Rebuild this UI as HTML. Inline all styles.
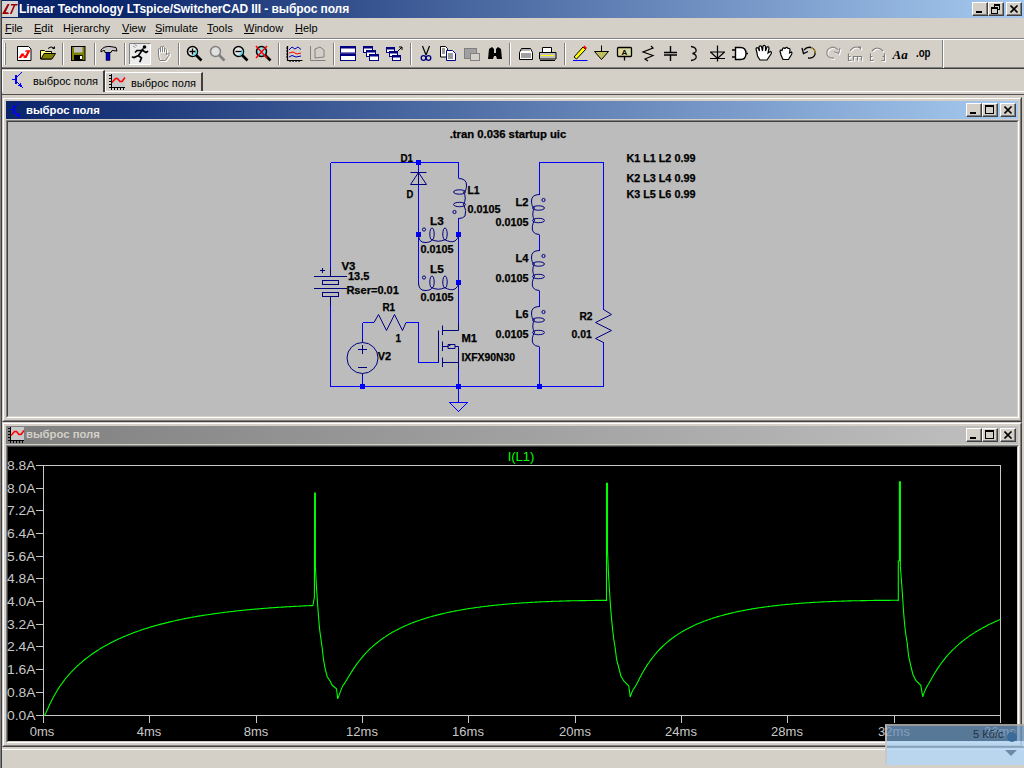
<!DOCTYPE html>
<html><head><meta charset="utf-8"><title>LTspice</title>
<style>
*{margin:0;padding:0;box-sizing:border-box}
html,body{width:1024px;height:768px;overflow:hidden}
body{position:relative;background:#d4d0c8;font-family:"Liberation Sans",sans-serif;font-size:11px;color:#000}
.a{position:absolute}
.t{position:absolute;white-space:nowrap;line-height:1}
.btn{position:absolute;background:#d4d0c8;border-top:1px solid #fff;border-left:1px solid #fff;border-right:1px solid #404040;border-bottom:1px solid #404040;box-shadow:inset -1px -1px 0 #808080}
.sep{position:absolute;width:2px;border-left:1px solid #808080;border-right:1px solid #fff}
u{text-decoration:underline}
</style></head><body>
<!-- left strip -->
<div class="a" style="left:0;top:0;width:1px;height:768px;background:#808080"></div>
<div class="a" style="left:1px;top:0;width:1px;height:768px;background:#404040"></div>
<!-- main title bar -->
<div class="a" style="left:2px;top:0;width:1022px;height:18px;background:linear-gradient(to right,#0a246a 0%,#0a246a 10%,#a6caf0 100%)"></div>
<div class="a" style="left:2px;top:1px;width:16px;height:16px;background:#d4d4d4"><svg width="16" height="16" viewBox="0 0 16 16"><path d="M0 13 L7 13 L6 11.2 L3.6 11.2 L7.6 3 L5.6 3 Z M9.2 3 L16 3 L15.2 4.6 L13.2 4.6 L9.6 13 L7.8 13 L11.6 4.6 L8.6 4.6 Z" fill="#a00000"/></svg></div>
<div class="t" style="left:19px;top:3px;font-weight:bold;font-size:12px;letter-spacing:-0.08px;color:#fff">Linear Technology LTspice/SwitcherCAD III - выброс поля</div>
<div class="btn" style="left:972px;top:2px;width:16px;height:14px"><div class="a" style="left:3px;top:8px;width:6px;height:2px;background:#000"></div></div>
<div class="btn" style="left:988px;top:2px;width:16px;height:14px"><svg class="a" style="left:0;top:0" width="14" height="12" shape-rendering="crispEdges"><path d="M5.5 3.5 V1.5 H10.5 V6.5 H8.5" stroke="#000" fill="none"/><rect x="5" y="1" width="6" height="2" fill="#000"/><rect x="2.5" y="5.5" width="6" height="5" stroke="#000" fill="none"/><rect x="2" y="4" width="7" height="2" fill="#000"/></svg></div>
<div class="btn" style="left:1006px;top:2px;width:16px;height:14px"><svg class="a" style="left:3px;top:2px" width="9" height="8"><path d="M0.5 0.5 L7.5 7.5 M7.5 0.5 L0.5 7.5" stroke="#000" stroke-width="1.6"/></svg></div>
<!-- menu -->
<div class="t" style="left:5px;top:23px"><u>F</u>ile</div>
<div class="t" style="left:34px;top:23px"><u>E</u>dit</div>
<div class="t" style="left:63px;top:23px">H<u>i</u>erarchy</div>
<div class="t" style="left:122px;top:23px"><u>V</u>iew</div>
<div class="t" style="left:155px;top:23px"><u>S</u>imulate</div>
<div class="t" style="left:207px;top:23px"><u>T</u>ools</div>
<div class="t" style="left:244px;top:23px"><u>W</u>indow</div>
<div class="t" style="left:295px;top:23px"><u>H</u>elp</div>
<div class="a" style="left:2px;top:38px;width:1022px;height:1px;background:#808080"></div>
<div class="a" style="left:2px;top:39px;width:1022px;height:1px;background:#fff"></div>
<!-- toolbar -->
<div class="a" style="left:2px;top:40px;width:1px;height:28px;background:#fff"></div>
<div class="a" style="left:4px;top:43px;width:2px;height:22px;border-left:1px solid #fff;border-right:1px solid #808080"></div>
<div class="a" style="left:2px;top:67px;width:1022px;height:1px;background:#808080"></div>
<div class="a" style="left:2px;top:68px;width:1022px;height:1px;background:#404040"></div>
<div class="sep" style="left:942px;top:40px;height:28px"></div>
<svg class="a" style="left:0;top:0" width="1024" height="70" viewBox="0 0 1024 70">
<g stroke-width="1">
<path d="M62.5 43v22 M94.5 43v22 M124.5 43v22 M178.5 43v22 M278.5 43v22 M333.5 43v22 M410.5 43v22 M509.5 43v22 M564.5 43v22" stroke="#808080"/>
<path d="M63.5 43v22 M95.5 43v22 M125.5 43v22 M179.5 43v22 M279.5 43v22 M334.5 43v22 M411.5 43v22 M510.5 43v22 M565.5 43v22" stroke="#fff"/>
</g>
<!-- new -->
<path d="M17.5 46.5h11l2.5 2.5v11.5h-13.5z" fill="#fff" stroke="#000"/>
<path d="M18.5 58 L21.5 53.5 L24.5 53.5 L23.5 55.2 L25.6 55.2 L27.2 51.8 L24.8 51.8 L25.8 50.2 L30.5 50.2 L26.5 58 L23.2 58 L24.2 56.6 L22.2 56.6 L21.2 58 Z" fill="#ff0000"/>
<!-- open -->
<path d="M40.5 50.5h4l1 1h6v7.5h-11z" fill="#ffff80" stroke="#000"/>
<path d="M41 59 L44 53.5h11.5L52 59z" fill="#808000" stroke="#000"/>
<path d="M48 48.5 Q51 45.5 54 48 M52.5 48.5h2v-2" stroke="#000" fill="none"/>
<!-- save -->
<rect x="71.5" y="46.5" width="13.5" height="14" fill="#808000" stroke="#000"/>
<rect x="74" y="47" width="8.5" height="5.5" fill="#c0c0c0"/>
<rect x="74" y="55" width="8.5" height="5.5" fill="#000"/>
<rect x="80" y="56" width="2" height="3" fill="#fff"/>
<!-- hammer -->
<path d="M101 50 Q104 46 110 46.5 L116 47.5 L117 51 L112 50.5 L111 52.5 L105 52.5 L104.5 50.5 Q102.5 50.5 101 52z" fill="#c8c8c8" stroke="#000"/>
<rect x="106" y="52.5" width="4" height="8" fill="#0000c0" stroke="#000" stroke-width="0.5"/>
<!-- run pressed -->
<rect x="129.5" y="43.5" width="21" height="21" fill="#ececec" stroke="#fff"/>
<path d="M129.5 64 V43.5 H150.5" stroke="#808080" fill="none"/>
<circle cx="144.5" cy="47" r="1.8" fill="#000"/>
<path d="M143 49 L138.5 55.5 M142 50 L146 52.5 L147.5 51.5 M141 50.5 L137 50.5 L135.5 52 M138.5 55.5 L134 57.5 L132.5 57 M138.5 55.5 L141.5 58 L140 61.5" stroke="#000" stroke-width="1.7" fill="none" stroke-linecap="round"/>
<path d="M133 46 L135.5 47.5 M134.5 44.5 L137 46" stroke="#808080" stroke-width="0.8"/>
<!-- hand disabled -->
<path d="M158.5 54 V49 Q159.5 47 160.5 49 V52 V47 Q161.5 45 162.5 47 V52 V47 Q163.5 45.5 164.5 47.5 V52 V49 Q165.5 47.5 166.5 49.5 V55 L168.5 53 Q170 53 169 55 L165.5 60.5 H160 Q158.5 58 158.5 54z" fill="none" stroke="#fff" stroke-width="1.2" transform="translate(1,1)"/>
<path d="M158.5 54 V49 Q159.5 47 160.5 49 V52 V47 Q161.5 45 162.5 47 V52 V47 Q163.5 45.5 164.5 47.5 V52 V49 Q165.5 47.5 166.5 49.5 V55 L168.5 53 Q170 53 169 55 L165.5 60.5 H160 Q158.5 58 158.5 54z" fill="none" stroke="#808080"/>
<!-- zoom + -->
<circle cx="192.5" cy="51.5" r="5" fill="#e4e4e4" stroke="#000" stroke-width="1.5"/><path d="M196 50 A4 4 0 0 1 193 55.5" stroke="#40e0f0" stroke-width="1.5" fill="none"/>
<path d="M189.5 51.5h6 M192.5 48.5v6" stroke="#000" stroke-width="1.3"/>
<path d="M196 55 L201.5 60.5" stroke="#000" stroke-width="2.6"/>
<!-- zoom disabled -->
<circle cx="215.5" cy="51.5" r="5" fill="#e0e0e0" stroke="#808080" stroke-width="1.5"/>
<path d="M219 55 L224.5 60.5" stroke="#808080" stroke-width="2.6"/>
<!-- zoom - -->
<circle cx="238.5" cy="51.5" r="5" fill="#e4e4e4" stroke="#000" stroke-width="1.5"/><path d="M242 50 A4 4 0 0 1 239 55.5" stroke="#40e0f0" stroke-width="1.5" fill="none"/>
<path d="M235.5 51.5h6" stroke="#000" stroke-width="1.3"/>
<path d="M242 55 L247.5 60.5" stroke="#000" stroke-width="2.6"/>
<!-- zoom X -->
<circle cx="261.5" cy="51.5" r="5" fill="#80e8f0" stroke="#000" stroke-width="1.5"/>
<path d="M265 55 L270.5 60.5" stroke="#000" stroke-width="2.6"/>
<path d="M256 46 L267 58 M267 46 L256 58" stroke="#ff0000" stroke-width="1.5"/>
<!-- chart -->
<path d="M287.5 46v14.5h15 M286 48h1.5 M286 51h1.5 M286 54h1.5 M286 57h1.5 M290 60.5v1.5 M293 60.5v1.5 M296 60.5v1.5 M299 60.5v1.5" stroke="#000" fill="none" stroke-width="1.2"/>
<path d="M289 50 L292 47 L295 49 L298 47 L301 49.5" stroke="#0000c0" fill="none"/>
<path d="M289 53 L293 52 L297 54 L301 53" stroke="#ff0000" fill="none"/>
<path d="M289 57 L292 55.5 L296 57 L301 56" stroke="#0000c0" fill="none"/>
<!-- chart disabled -->
<path d="M310.5 46v14.5h15 M315 49 L320 47 L324 50 V57 L315 58z" stroke="#808080" fill="none"/>
<!-- tile -->
<rect x="340.5" y="46.5" width="15" height="6.5" fill="#fff" stroke="#000080"/><rect x="340.5" y="46.5" width="15" height="2" fill="#000080"/>
<rect x="340.5" y="54" width="15" height="6.5" fill="#fff" stroke="#000080"/><rect x="340.5" y="54" width="15" height="2" fill="#000080"/>
<!-- cascade -->
<rect x="363.5" y="46.5" width="9" height="6" fill="#fff" stroke="#000080"/><rect x="363.5" y="46.5" width="9" height="2" fill="#000080"/>
<rect x="366.5" y="50.5" width="9" height="6" fill="#fff" stroke="#000080"/><rect x="366.5" y="50.5" width="9" height="2" fill="#000080"/>
<rect x="369.5" y="54.5" width="9" height="6" fill="#fff" stroke="#000080"/><rect x="369.5" y="54.5" width="9" height="2" fill="#000080"/>
<!-- cascade2 -->
<rect x="386.5" y="47.5" width="8" height="5" fill="#fff" stroke="#000080"/><rect x="386.5" y="47.5" width="8" height="2" fill="#000080"/>
<rect x="389.5" y="51.5" width="8" height="5" fill="#fff" stroke="#000080"/><rect x="389.5" y="51.5" width="8" height="2" fill="#000080"/>
<rect x="392.5" y="55.5" width="8" height="5" fill="#fff" stroke="#000080"/><rect x="392.5" y="55.5" width="8" height="2" fill="#000080"/>
<path d="M398 51 L402 47 M399 47h3v3" stroke="#000" fill="none"/>
<!-- cut -->
<path d="M422.5 46 L426 55 M429.5 46 L426 55" stroke="#000" stroke-width="1.2"/>
<circle cx="423.5" cy="58" r="2.3" fill="none" stroke="#000080" stroke-width="1.3"/>
<circle cx="428.5" cy="58" r="2.3" fill="none" stroke="#000080" stroke-width="1.3"/>
<!-- copy -->
<path d="M440.5 46.5h5l2 2v8.5h-7z" fill="#fff" stroke="#000"/>
<path d="M446.5 50.5h6l3 3v7h-9z" fill="#fff" stroke="#000080"/>
<path d="M442 49h3M442 51h3M442 53h3M448 54h5M448 56h5M448 58h5" stroke="#000" stroke-width="0.8"/>
<!-- paste disabled -->
<rect x="464.5" y="48.5" width="12" height="10" fill="#a0a0a0" stroke="#808080"/>
<rect x="470.5" y="53.5" width="9" height="7" fill="#d4d0c8" stroke="#808080"/>
<!-- find -->
<path d="M488 59 L489 49 L492 47 L494 49 L494 53 L496 53 L496 49 L498 47 L501 49 L502 59 L497 59 L496 56 L494 56 L493 59z" fill="#000"/>
<!-- print preview -->
<path d="M519.5 52.5 L521.5 48.5 H530.5 L532.5 52.5 V59.5 H519.5z" fill="#fff" stroke="#000"/>
<rect x="521" y="53" width="10" height="5" fill="#a0a0a0"/>
<path d="M521 50h9" stroke="#000" stroke-width="0.6"/>
<!-- print -->
<path d="M542.5 47.5h9v5h-9z" fill="#fff" stroke="#000"/>
<path d="M539.5 52.5h16.5v6.5h-16.5z" fill="#c0c0c0" stroke="#000"/>
<path d="M541 55.5h13" stroke="#ffff00"/>
<path d="M540 60.5h15" stroke="#000"/>
<!-- pencil -->
<path d="M574 57 L583 47 L585.5 49.5 L576.5 59z" fill="#ffff00" stroke="#000"/>
<path d="M583 47 L584.5 45.5 L587 48 L585.5 49.5z" fill="#ff0000"/>
<path d="M573 60.5h14.5" stroke="#0000ff"/>
<!-- ground -->
<path d="M601.5 45.5v6" stroke="#000"/>
<path d="M594.5 51.5h14l-7 8z" fill="#c0c060" stroke="#000"/>
<!-- label -->
<rect x="617.5" y="47.5" width="14" height="9" rx="1" fill="#d8d8a0" stroke="#000" stroke-width="1.3"/>
<path d="M624.5 56.5v4" stroke="#000" stroke-width="1.3"/>
<text x="621.5" y="55" font-family="Liberation Sans" font-size="8" font-weight="bold">A</text>
<!-- resistor -->
<path d="M651 46 L653 48 L643 52 L653 55.5 L645 59 L648 61" stroke="#000" fill="none" stroke-width="1.2"/>
<!-- capacitor -->
<path d="M670.5 46v6 M670.5 55v6 M664 52.5h13 M664 55h13" stroke="#000" stroke-width="1.4"/>
<!-- inductor -->
<path d="M691 46.5 Q697 47.5 696 51.5 Q695 53 692.5 53.5 Q697 54.5 696 58 Q695 60 691 60.5" stroke="#000" fill="none" stroke-width="1.3"/>
<!-- diode -->
<path d="M717.5 45.5v16 M710 52h15 M710 58.5h15 M710.5 52 L717.5 58.5 L724.5 52" stroke="#000" fill="none" stroke-width="1.2"/>
<!-- gate -->
<path d="M735.5 47.5h5 Q746 47.5 746 53.5 Q746 59.5 740.5 59.5 h-5z M732 50h3.5 M732 57h3.5 M746 53.5h2" stroke="#000" fill="#fff" stroke-width="1.4"/>
<!-- hand big -->
<path d="M757 53 L756 49 Q756.5 47 758 48 L759.5 51 L759 47 Q760 45 761.5 46.5 L762.5 51 L763 46 Q764.5 44.5 765.5 46.5 L765.5 51 L767 47 Q769 46 769 48.5 L768 53 L770.5 51.5 Q772 52 771 54 L767 60 H760 L757.5 56z" fill="#fff" stroke="#000" stroke-width="1.2"/>
<!-- hand small -->
<path d="M781 55 L780 51 Q781 49.5 782 50.5 L782.5 49 Q783.5 47 785 48.5 L785.5 48 Q787 46.5 788 48.5 L788.5 48.5 Q790 48 790 50 L789.5 53 L791.5 52 Q792.5 53 791.5 54.5 L788.5 59.5 H783 z" fill="#fff" stroke="#000" stroke-width="1.2"/>
<!-- undo -->
<path d="M804 50 Q807 46.5 811 47.5 Q816 49.5 815 54.5 Q813 59 808 58" stroke="#000" fill="none" stroke-width="1.3"/>
<path d="M811 47.5 Q815 49 815.5 53" stroke="#c0a000" fill="none" stroke-width="1"/>
<path d="M802 48 L803.5 53.5 L808 51.5" stroke="#000" fill="none" stroke-width="1.3"/>
<!-- redo disabled -->
<path d="M838 50 Q835 46.5 831 47.5 Q826 49.5 827 54.5 Q829 59 834 58 M840 48 L838.5 53.5 L834 51.5" stroke="#fff" fill="none" stroke-width="1.3" transform="translate(1,1)"/>
<path d="M838 50 Q835 46.5 831 47.5 Q826 49.5 827 54.5 Q829 59 834 58 M840 48 L838.5 53.5 L834 51.5" stroke="#909090" fill="none" stroke-width="1.3"/>
<!-- rotate disabled -->
<path d="M848.5 53.5v7h3 M848.5 56.5h2 M853.5 60.5v-4h8v4 M857.5 56.5v4 M850 51 Q854 45 860 48 M858 47h2.5v2.5" stroke="#fff" fill="none" stroke-width="1.2" transform="translate(1,1)"/>
<path d="M848.5 53.5v7h3 M848.5 56.5h2 M853.5 60.5v-4h8v4 M857.5 56.5v4 M850 51 Q854 45 860 48 M858 47h2.5v2.5" stroke="#808080" fill="none" stroke-width="1.2"/>
<!-- mirror disabled -->
<path d="M870.5 53.5v7h3 M870.5 56.5h2 M884.5 53.5v7h-3 M884.5 56.5h-2 M872 51 Q877 45 883 51" stroke="#fff" fill="none" stroke-width="1.2" transform="translate(1,1)"/>
<path d="M870.5 53.5v7h3 M870.5 56.5h2 M884.5 53.5v7h-3 M884.5 56.5h-2 M872 51 Q877 45 883 51" stroke="#808080" fill="none" stroke-width="1.2"/>
<!-- Aa -->
<text x="892.5" y="59" font-family="Liberation Serif" font-size="13" font-weight="bold" font-style="italic">Aa</text>
<!-- .op -->
<text x="916" y="57" font-family="Liberation Sans" font-size="12" font-weight="bold" textLength="14.5" lengthAdjust="spacingAndGlyphs">.op</text>
</svg>

<!-- tabs -->
<div class="a" style="left:2px;top:70px;width:103px;height:22px;border-top:1px solid #fff;border-left:1px solid #fff;border-right:2px solid #404040;background:#d4d0c8"></div>
<div class="a" style="left:105px;top:72px;width:98px;height:19px;border-top:1px solid #fff;border-left:1px solid #fff;border-right:2px solid #404040;background:#d4d0c8"></div>
<div class="a" style="left:105px;top:91px;width:919px;height:1px;background:#fff"></div>
<div class="a" style="left:2px;top:94px;width:1022px;height:1px;background:#505050"></div>
<svg class="a" style="left:0;top:0" width="32" height="94" shape-rendering="crispEdges"><g fill="#0000ff"><rect x="12" y="79" width="3" height="1"/><rect x="15" y="75" width="2" height="9"/><rect x="17" y="76" width="1" height="1"/><rect x="18" y="75" width="1" height="1"/><rect x="19" y="74" width="1" height="1"/><rect x="20" y="73" width="1" height="1"/><rect x="21" y="72" width="1" height="1"/><rect x="17" y="82" width="1" height="1"/><rect x="18" y="83" width="1" height="1"/><rect x="19" y="84" width="1" height="1"/><rect x="20" y="85" width="2" height="2"/><rect x="18" y="85" width="2" height="1"/><rect x="20" y="83" width="1" height="2"/><rect x="22" y="87" width="1" height="1"/></g></svg>
<div class="t" style="left:33px;top:76px">выброс поля</div>
<svg class="a" style="left:107px;top:72px" width="20" height="20" viewBox="107 72 20 20" shape-rendering="crispEdges"><rect x="112" y="74" width="13" height="13" fill="#c8c8c8"/><g fill="#000"><rect x="111" y="74" width="1" height="16"/><rect x="109" y="87" width="16" height="1"/><rect x="109" y="75" width="2" height="1"/><rect x="109" y="78" width="2" height="1"/><rect x="109" y="81" width="2" height="1"/><rect x="109" y="84" width="2" height="1"/><rect x="114" y="88" width="1" height="2"/><rect x="117" y="88" width="1" height="2"/><rect x="120" y="88" width="1" height="2"/><rect x="123" y="88" width="1" height="2"/></g><path d="M112 82.5 L115.5 78.5 L117.5 78.5 L120 81.5 L122 81.5 L125 77.5" stroke="#ff0000" stroke-width="1.6" fill="none" shape-rendering="auto"/></svg>
<div class="t" style="left:131px;top:78px">выброс поля</div>
<!-- MDI bottom & status -->

<!-- schematic child window -->
<div class="a" style="left:2px;top:97px;width:1020px;height:325px;background:#d4d0c8;border-top:1px solid #d4d0c8;border-left:1px solid #d4d0c8;border-right:1px solid #404040;border-bottom:1px solid #404040"><div class="a" style="left:0;top:0;right:0;bottom:0;border-top:1px solid #fff;border-left:1px solid #fff;border-right:1px solid #808080;border-bottom:1px solid #808080"></div></div>
<div class="a" style="left:6px;top:101px;width:1012px;height:18px;background:linear-gradient(to right,#0a246a,#a6caf0)"></div>
<svg class="a" style="left:0;top:0" width="32" height="120" shape-rendering="crispEdges"><g fill="#0000ff" transform="translate(-2,30)"><rect x="12" y="79" width="3" height="1"/><rect x="15" y="75" width="2" height="9"/><rect x="17" y="76" width="1" height="1"/><rect x="18" y="75" width="1" height="1"/><rect x="19" y="74" width="1" height="1"/><rect x="20" y="73" width="1" height="1"/><rect x="21" y="72" width="1" height="1"/><rect x="17" y="82" width="1" height="1"/><rect x="18" y="83" width="1" height="1"/><rect x="19" y="84" width="1" height="1"/><rect x="20" y="85" width="2" height="2"/><rect x="18" y="85" width="2" height="1"/><rect x="20" y="83" width="1" height="2"/><rect x="22" y="87" width="1" height="1"/></g></svg>
<div class="t" style="left:26px;top:105px;font-weight:bold;font-size:11.3px;color:#fff">выброс поля</div>
<div class="btn" style="left:966px;top:103px;width:16px;height:14px"><div class="a" style="left:3px;top:8px;width:6px;height:2px;background:#000"></div></div>
<div class="btn" style="left:982px;top:103px;width:16px;height:14px"><div class="a" style="left:2px;top:1px;width:9px;height:9px;border:1px solid #000;border-top-width:2px"></div></div>
<div class="btn" style="left:1000px;top:103px;width:16px;height:14px"><svg class="a" style="left:3px;top:2px" width="9" height="8"><path d="M0.5 0.5 L7.5 7.5 M7.5 0.5 L0.5 7.5" stroke="#000" stroke-width="1.6"/></svg></div>
<!-- client edge -->
<div class="a" style="left:6px;top:120px;width:1013px;height:298px;border-top:1px solid #808080;border-left:1px solid #808080;border-right:1px solid #fff;border-bottom:1px solid #fff"><div class="a" style="left:0;top:0;right:0;bottom:0;border-top:1px solid #404040;border-left:1px solid #404040;border-right:1px solid #d4d0c8;border-bottom:1px solid #d4d0c8;background:#bcbcbc"></div></div>
<svg class="a" style="left:0;top:0" width="1024" height="418" viewBox="0 0 1024 418" shape-rendering="crispEdges">
<g fill="none" stroke="#0000ff" stroke-width="1">
<!-- left loop -->
<path d="M330.5 162.5 H458.5 V178 M458.5 218 V323 M330.5 162.5 V267 M330.5 306 V386.5 H603.5 V342 M603.5 309.5 V162.5 H539.5 V194.5 M539.5 235 V250.5 M539.5 290.5 V306.5 M539.5 346.5 V386.5"/>
<path d="M418.5 162.5 V172 M418.5 185 V282.5"/>
<path d="M362.5 322.5 V339 M362.5 376 V386.5 M362.5 322.5 H374 M406 322.5 H418.5 V362.5 H438.5"/>
<path d="M458.5 370 V402.5"/>
<path d="M449.5 402.5 H467.5 L458.5 411.5 Z"/>
</g>
<g fill="#0000ff" shape-rendering="crispEdges">
<rect x="416" y="160" width="5" height="5"/>
<rect x="416" y="232" width="5" height="5"/>
<rect x="456" y="232" width="5" height="5"/>
<rect x="456" y="280" width="5" height="5"/>
<rect x="360" y="384" width="5" height="5"/>
<rect x="456" y="384" width="5" height="5"/>
<rect x="537" y="384" width="5" height="5"/>
</g>
<g fill="none" stroke="#000080" stroke-width="1" shape-rendering="auto">
<!-- diode -->
<path d="M418.5 172.5 V185 M410.5 172.5 H426.5 M410.5 184.5 H426.5 L418.5 172.5 Z"/>
<!-- L1 -->
<path d="M458.5 178.5 Q466.5 178.5 466.5 185 Q466.5 191 463.5 192.5 M463.5 191.5 Q467 198 463.5 204.5 M463.5 204 Q467 211 465 216 Q463 218.5 458.5 218.5"/>
<ellipse cx="459.5" cy="192" rx="6" ry="2.2"/>
<ellipse cx="459.5" cy="204.5" rx="6" ry="2.2"/>
<circle cx="454.5" cy="212" r="1.6"/>
<!-- L3 -->
<path d="M418.5 234.5 Q418.5 242.5 425 242.5 Q431 242.5 432.5 239.5 M431.5 239.5 Q438.5 243 445 239.5 M444.5 239.5 Q451 243 455 241 Q458.5 239 458.5 234.5"/>
<ellipse cx="432" cy="234" rx="2.2" ry="6"/>
<ellipse cx="445" cy="234" rx="2.2" ry="6"/>
<circle cx="424" cy="229.5" r="1.6"/>
<!-- L5 -->
<path d="M418.5 282.5 Q418.5 290.5 425 290.5 Q431 290.5 432.5 287.5 M431.5 287.5 Q438.5 291 445 287.5 M444.5 287.5 Q451 291 455 289 Q458.5 287 458.5 282.5"/>
<ellipse cx="432" cy="282" rx="2.2" ry="6"/>
<ellipse cx="445" cy="282" rx="2.2" ry="6"/>
<circle cx="424" cy="277.5" r="1.6"/>
<!-- L2 L4 L6 -->
<g id="Lr">
<path d="M539.5 194.5 Q531.5 194.5 531.5 201 Q531.5 207 534.5 208 M534.5 207.5 Q531 214 534.5 220.5 M534.5 220 Q531 227 533 231.5 Q535 234.5 539.5 234.5"/>
<ellipse cx="538.5" cy="208" rx="6" ry="2.2"/>
<ellipse cx="538.5" cy="220.5" rx="6" ry="2.2"/>
<circle cx="543.5" cy="200" r="1.6"/>
</g>
<use href="#Lr" y="56"/>
<use href="#Lr" y="112"/>
<!-- R2 -->
<path d="M603.5 309.5 L611.5 314.5 L595.5 322.5 L611.5 330.5 L595.5 338.5 L603.5 342.5"/>
<!-- R1 -->
<path d="M374 322.5 L378.5 314.5 L386.5 330.5 L394.5 314.5 L402.5 330.5 L406 322.5"/>
<!-- V3 battery -->
<path d="M330.5 267 V276.5 M314 276.5 H347 M314 288.5 H347 M330.5 296.5 V306 M320 270.5 H325 M322.5 268 V273"/>
<rect x="322.5" y="280.5" width="16" height="4"/>
<rect x="322.5" y="292.5" width="16" height="4"/>
<!-- V2 -->
<circle cx="362.5" cy="358" r="15.5"/>
<path d="M362.5 339 V342.5 M362.5 373.5 V376 M358 349.5 H367 M362.5 345 V354 M358 367.5 H367"/>
<!-- M1 -->
<path d="M458.5 323 V330.5 H442.5 M438.5 330.5 V362.5 M442.5 325.5 V335 M442.5 341.5 V351 M442.5 357.5 V367 M442.5 346.5 H448 M455 346.5 H458.5 V370 M442.5 362.5 H458.5"/>
<path d="M448 344.5 H455 V348.5 H448 Z M448 346.5 L451 344.5"/>
</g>
<g font-family="Liberation Sans" font-weight="bold" font-size="10.5" fill="#000" stroke="#000" stroke-width="0.25" shape-rendering="auto">
<text x="449.7" y="138.0" textLength="116.6" lengthAdjust="spacingAndGlyphs">.tran 0.036 startup uic</text>
<text x="626.4" y="162.0" textLength="69.0" lengthAdjust="spacingAndGlyphs">K1 L1 L2 0.99</text>
<text x="626.4" y="182.0" textLength="69.0" lengthAdjust="spacingAndGlyphs">K2 L3 L4 0.99</text>
<text x="626.4" y="198.0" textLength="69.0" lengthAdjust="spacingAndGlyphs">K3 L5 L6 0.99</text>
<text x="400.4" y="161.6" textLength="12.5" lengthAdjust="spacingAndGlyphs">D1</text>
<text x="406.6" y="197.8" textLength="6.8" lengthAdjust="spacingAndGlyphs">D</text>
<text x="467.4" y="193.7" textLength="12.2" lengthAdjust="spacingAndGlyphs">L1</text>
<text x="467.4" y="213.3" textLength="33.2" lengthAdjust="spacingAndGlyphs">0.0105</text>
<text x="430.0" y="225.2" textLength="13.8" lengthAdjust="spacingAndGlyphs">L3</text>
<text x="420.4" y="252.5" textLength="33.0" lengthAdjust="spacingAndGlyphs">0.0105</text>
<text x="430.0" y="272.5" textLength="13.8" lengthAdjust="spacingAndGlyphs">L5</text>
<text x="420.4" y="300.7" textLength="33.0" lengthAdjust="spacingAndGlyphs">0.0105</text>
<text x="341.4" y="269.6" textLength="14.0" lengthAdjust="spacingAndGlyphs">V3</text>
<text x="348.0" y="279.6" textLength="21.4" lengthAdjust="spacingAndGlyphs">13.5</text>
<text x="346.4" y="293.6" textLength="52.5" lengthAdjust="spacingAndGlyphs">Rser=0.01</text>
<text x="382.4" y="310.8" textLength="12.7" lengthAdjust="spacingAndGlyphs">R1</text>
<text x="395.4" y="341.7" textLength="5.5" lengthAdjust="spacingAndGlyphs">1</text>
<text x="377.8" y="359.6" textLength="13.4" lengthAdjust="spacingAndGlyphs">V2</text>
<text x="461.4" y="341.9" textLength="15.6" lengthAdjust="spacingAndGlyphs">M1</text>
<text x="461.4" y="361.4" textLength="53.7" lengthAdjust="spacingAndGlyphs">IXFX90N30</text>
<text x="515.4" y="206.0" textLength="13.0" lengthAdjust="spacingAndGlyphs">L2</text>
<text x="495.4" y="226.0" textLength="33.0" lengthAdjust="spacingAndGlyphs">0.0105</text>
<text x="515.4" y="262.0" textLength="13.0" lengthAdjust="spacingAndGlyphs">L4</text>
<text x="495.4" y="282.0" textLength="33.0" lengthAdjust="spacingAndGlyphs">0.0105</text>
<text x="515.4" y="318.0" textLength="13.0" lengthAdjust="spacingAndGlyphs">L6</text>
<text x="495.4" y="338.0" textLength="33.0" lengthAdjust="spacingAndGlyphs">0.0105</text>
<text x="579.4" y="319.6" textLength="13.1" lengthAdjust="spacingAndGlyphs">R2</text>
<text x="571.5" y="337.9" textLength="20.3" lengthAdjust="spacingAndGlyphs">0.01</text>
</g>
</svg>
<!-- waveform child window -->
<div class="a" style="left:2px;top:422px;width:1020px;height:325px;background:#d4d0c8;border-top:1px solid #d4d0c8;border-left:1px solid #d4d0c8;border-right:1px solid #404040;border-bottom:1px solid #404040"><div class="a" style="left:0;top:0;right:0;bottom:0;border-top:1px solid #fff;border-left:1px solid #fff;border-right:1px solid #808080;border-bottom:1px solid #808080"></div></div>
<div class="a" style="left:6px;top:426px;width:1012px;height:18px;background:linear-gradient(to right,#808080,#c0c0c0)"></div>
<svg class="a" style="left:6px;top:426px" width="20" height="18" viewBox="6 426 20 18" shape-rendering="crispEdges"><rect x="11" y="427" width="13" height="13" fill="#c8c8c8"/><g fill="#000"><rect x="10" y="427" width="1" height="16"/><rect x="8" y="440" width="16" height="1"/><rect x="8" y="428" width="2" height="1"/><rect x="8" y="431" width="2" height="1"/><rect x="8" y="434" width="2" height="1"/><rect x="8" y="437" width="2" height="1"/><rect x="13" y="441" width="1" height="2"/><rect x="16" y="441" width="1" height="2"/><rect x="19" y="441" width="1" height="2"/><rect x="22" y="441" width="1" height="2"/></g><path d="M11 435.5 L14.5 431.5 L16.5 431.5 L19 434.5 L21 434.5 L24 430.5" stroke="#ff0000" stroke-width="1.6" fill="none" shape-rendering="auto"/></svg>
<div class="t" style="left:26px;top:429px;font-weight:bold;font-size:11.3px;color:#d4d0c8">выброс поля</div>
<div class="btn" style="left:966px;top:428px;width:16px;height:14px"><div class="a" style="left:3px;top:8px;width:6px;height:2px;background:#000"></div></div>
<div class="btn" style="left:982px;top:428px;width:16px;height:14px"><div class="a" style="left:2px;top:1px;width:9px;height:9px;border:1px solid #000;border-top-width:2px"></div></div>
<div class="btn" style="left:1000px;top:428px;width:16px;height:14px"><svg class="a" style="left:3px;top:2px" width="9" height="8"><path d="M0.5 0.5 L7.5 7.5 M7.5 0.5 L0.5 7.5" stroke="#000" stroke-width="1.6"/></svg></div>
<div class="a" style="left:6px;top:445px;width:1013px;height:298px;border-top:1px solid #808080;border-left:1px solid #808080;border-right:1px solid #fff;border-bottom:1px solid #fff"><div class="a" style="left:0;top:0;right:0;bottom:0;border-top:1px solid #404040;border-left:1px solid #404040;border-right:1px solid #d4d0c8;border-bottom:1px solid #d4d0c8;background:#000"></div></div>
<svg class="a" style="left:0;top:0" width="1024" height="768" viewBox="0 0 1024 768">
<g stroke="#c8c8c8" stroke-width="1" fill="none" shape-rendering="crispEdges">
<path d="M43.5 465.5 H1000.5 V715.5 H43.5 Z"/>
<path d="M36 465.5h7 M36 488.5h7 M36 510.5h7 M36 533.5h7 M36 556.5h7 M36 578.5h7 M36 601.5h7 M36 624.5h7 M36 646.5h7 M36 669.5h7 M36 692.5h7 M36 715.5h7"/>
<path d="M43.5 715.5v7 M149.5 715.5v7 M256.5 715.5v7 M362.5 715.5v7 M468.5 715.5v7 M575.5 715.5v7 M681.5 715.5v7 M787.5 715.5v7 M894.5 715.5v7 M1000.5 715.5v7"/>
</g>
<g font-family="Liberation Sans" font-size="13" fill="#c8c8c8">
<text x="7" y="470" textLength="28.5" lengthAdjust="spacingAndGlyphs">8.8A</text>
<text x="7" y="493" textLength="28.5" lengthAdjust="spacingAndGlyphs">8.0A</text>
<text x="7" y="515" textLength="28.5" lengthAdjust="spacingAndGlyphs">7.2A</text>
<text x="7" y="538" textLength="28.5" lengthAdjust="spacingAndGlyphs">6.4A</text>
<text x="7" y="561" textLength="28.5" lengthAdjust="spacingAndGlyphs">5.6A</text>
<text x="7" y="583" textLength="28.5" lengthAdjust="spacingAndGlyphs">4.8A</text>
<text x="7" y="606" textLength="28.5" lengthAdjust="spacingAndGlyphs">4.0A</text>
<text x="7" y="629" textLength="28.5" lengthAdjust="spacingAndGlyphs">3.2A</text>
<text x="7" y="651" textLength="28.5" lengthAdjust="spacingAndGlyphs">2.4A</text>
<text x="7" y="674" textLength="28.5" lengthAdjust="spacingAndGlyphs">1.6A</text>
<text x="7" y="697" textLength="28.5" lengthAdjust="spacingAndGlyphs">0.8A</text>
<text x="7" y="720" textLength="28.5" lengthAdjust="spacingAndGlyphs">0.0A</text>
</g>
<g font-family="Liberation Sans" font-size="13" fill="#c8c8c8" text-anchor="middle">
<text x="42" y="736">0ms</text>
<text x="149" y="736">4ms</text>
<text x="256" y="736">8ms</text>
<text x="362" y="736">12ms</text>
<text x="468" y="736">16ms</text>
<text x="575" y="736">20ms</text>
<text x="681" y="736">24ms</text>
<text x="787" y="736">28ms</text>
<text x="894" y="736">32ms</text>
<text x="1000" y="736">36ms</text>
</g>
<text x="521" y="461" font-family="Liberation Sans" font-size="13" fill="#00ff00" text-anchor="middle">I(L1)</text>
<polyline points="43.9,715.7 44.9,714.6 45.9,712.7 46.9,710.6 47.9,708.4 48.9,706.2 49.9,704.1 50.9,702.0 51.9,700.0 52.9,698.0 53.9,696.2 54.9,694.4 55.9,692.7 56.9,691.0 57.9,689.4 58.9,687.8 59.9,686.3 60.9,684.9 61.9,683.5 62.9,682.1 63.9,680.8 64.9,679.5 65.9,678.2 66.9,677.0 67.9,675.8 68.9,674.7 69.9,673.6 70.9,672.5 71.9,671.4 72.9,670.4 73.9,669.4 74.9,668.4 75.9,667.4 76.9,666.4 77.9,665.5 78.9,664.6 79.9,663.7 80.9,662.8 81.9,662.0 82.9,661.1 83.9,660.3 84.9,659.5 85.9,658.7 86.9,657.9 87.9,657.2 88.9,656.4 89.9,655.7 90.9,654.9 91.9,654.2 92.9,653.5 93.9,652.8 94.9,652.2 95.9,651.5 96.9,650.8 97.9,650.2 98.9,649.6 99.9,648.9 100.9,648.3 101.9,647.7 102.9,647.1 103.9,646.6 104.9,646.0 105.9,645.4 106.9,644.9 107.9,644.3 108.9,643.8 109.9,643.2 110.9,642.7 111.9,642.2 112.9,641.7 113.9,641.2 114.9,640.7 115.9,640.2 116.9,639.8 117.9,639.3 118.9,638.8 119.9,638.4 120.9,637.9 121.9,637.5 122.9,637.0 123.9,636.6 124.9,636.2 125.9,635.8 126.9,635.4 127.9,634.9 128.9,634.5 129.9,634.1 130.9,633.8 131.9,633.4 132.9,633.0 133.9,632.6 134.9,632.2 135.9,631.9 136.9,631.5 137.9,631.2 138.9,630.8 139.9,630.5 140.9,630.1 141.9,629.8 142.9,629.5 143.9,629.1 144.9,628.8 145.9,628.5 146.9,628.2 147.9,627.9 148.9,627.5 149.9,627.2 150.9,626.9 151.9,626.6 152.9,626.4 153.9,626.1 154.9,625.8 155.9,625.5 156.9,625.2 157.9,624.9 158.9,624.7 159.9,624.4 160.9,624.1 161.9,623.9 162.9,623.6 163.9,623.4 164.9,623.1 165.9,622.9 166.9,622.6 167.9,622.4 168.9,622.1 169.9,621.9 170.9,621.7 171.9,621.4 172.9,621.2 173.9,621.0 174.9,620.7 175.9,620.5 176.9,620.3 177.9,620.1 178.9,619.9 179.9,619.7 180.9,619.5 181.9,619.2 182.9,619.0 183.9,618.8 184.9,618.6 185.9,618.4 186.9,618.3 187.9,618.1 188.9,617.9 189.9,617.7 190.9,617.5 191.9,617.3 192.9,617.1 193.9,617.0 194.9,616.8 195.9,616.6 196.9,616.4 197.9,616.3 198.9,616.1 199.9,615.9 200.9,615.8 201.9,615.6 202.9,615.4 203.9,615.3 204.9,615.1 205.9,615.0 206.9,614.8 207.9,614.7 208.9,614.5 209.9,614.4 210.9,614.2 211.9,614.1 212.9,613.9 213.9,613.8 214.9,613.6 215.9,613.5 216.9,613.4 217.9,613.2 218.9,613.1 219.9,613.0 220.9,612.8 221.9,612.7 222.9,612.6 223.9,612.4 224.9,612.3 225.9,612.2 226.9,612.1 227.9,611.9 228.9,611.8 229.9,611.7 230.9,611.6 231.9,611.5 232.9,611.4 233.9,611.2 234.9,611.1 235.9,611.0 236.9,610.9 237.9,610.8 238.9,610.7 239.9,610.6 240.9,610.5 241.9,610.4 242.9,610.3 243.9,610.2 244.9,610.1 245.9,610.0 246.9,609.9 247.9,609.8 248.9,609.7 249.9,609.6 250.9,609.5 251.9,609.4 252.9,609.3 253.9,609.2 254.9,609.1 255.9,609.1 256.9,609.0 257.9,608.9 258.9,608.8 259.9,608.7 260.9,608.6 261.9,608.6 262.9,608.5 263.9,608.4 264.9,608.3 265.9,608.2 266.9,608.2 267.9,608.1 268.9,608.0 269.9,607.9 270.9,607.9 271.9,607.8 272.9,607.7 273.9,607.6 274.9,607.6 275.9,607.5 276.9,607.4 277.9,607.4 278.9,607.3 279.9,607.2 280.9,607.2 281.9,607.1 282.9,607.1 283.9,607.0 284.9,606.9 285.9,606.9 286.9,606.8 287.9,606.8 288.9,606.7 289.9,606.6 290.9,606.6 291.9,606.5 292.9,606.5 293.9,606.4 294.9,606.4 295.9,606.3 296.9,606.3 297.9,606.2 298.9,606.2 299.9,606.1 300.9,606.1 301.9,606.0 302.9,606.0 303.9,605.9 304.9,605.9 305.9,605.8 306.9,605.8 307.9,605.7 308.9,605.7 309.9,605.6 310.9,605.6 311.9,605.6 312.9,605.5 314.4,597.0 314.6,493.0 315.4,493.0 315.4,567.0 316.5,587.5 317.6,604.3 318.6,617.2 319.6,629.4 320.8,638.0 322.2,648.0 323.6,660.2 325.0,668.0 327.2,676.7 330.1,681.0 332.2,685.3 336.5,688.8 337.7,698.9 340.1,692.4 342.7,685.9 343.7,684.6 344.7,683.1 345.7,681.5 346.7,679.9 347.7,678.2 348.7,676.5 349.7,674.9 350.7,673.2 351.7,671.6 352.7,670.1 353.7,668.6 354.7,667.1 355.7,665.6 356.7,664.2 357.7,662.9 358.7,661.5 359.7,660.3 360.7,659.0 361.7,657.8 362.7,656.6 363.7,655.4 364.7,654.3 365.7,653.2 366.7,652.2 367.7,651.1 368.7,650.1 369.7,649.2 370.7,648.2 371.7,647.3 372.7,646.4 373.7,645.5 374.7,644.6 375.7,643.8 376.7,643.0 377.7,642.2 378.7,641.4 379.7,640.6 380.7,639.9 381.7,639.2 382.7,638.4 383.7,637.7 384.7,637.1 385.7,636.4 386.7,635.7 387.7,635.1 388.7,634.5 389.7,633.9 390.7,633.3 391.7,632.7 392.7,632.1 393.7,631.6 394.7,631.0 395.7,630.5 396.7,629.9 397.7,629.4 398.7,628.9 399.7,628.4 400.7,627.9 401.7,627.5 402.7,627.0 403.7,626.5 404.7,626.1 405.7,625.6 406.7,625.2 407.7,624.8 408.7,624.3 409.7,623.9 410.7,623.5 411.7,623.1 412.7,622.7 413.7,622.4 414.7,622.0 415.7,621.6 416.7,621.2 417.7,620.9 418.7,620.5 419.7,620.2 420.7,619.8 421.7,619.5 422.7,619.2 423.7,618.9 424.7,618.5 425.7,618.2 426.7,617.9 427.7,617.6 428.7,617.3 429.7,617.0 430.7,616.8 431.7,616.5 432.7,616.2 433.7,615.9 434.7,615.7 435.7,615.4 436.7,615.1 437.7,614.9 438.7,614.6 439.7,614.4 440.7,614.1 441.7,613.9 442.7,613.7 443.7,613.4 444.7,613.2 445.7,613.0 446.7,612.7 447.7,612.5 448.7,612.3 449.7,612.1 450.7,611.9 451.7,611.7 452.7,611.5 453.7,611.3 454.7,611.1 455.7,610.9 456.7,610.7 457.7,610.5 458.7,610.3 459.7,610.2 460.7,610.0 461.7,609.8 462.7,609.6 463.7,609.5 464.7,609.3 465.7,609.1 466.7,609.0 467.7,608.8 468.7,608.6 469.7,608.5 470.7,608.3 471.7,608.2 472.7,608.0 473.7,607.9 474.7,607.7 475.7,607.6 476.7,607.5 477.7,607.3 478.7,607.2 479.7,607.1 480.7,606.9 481.7,606.8 482.7,606.7 483.7,606.5 484.7,606.4 485.7,606.3 486.7,606.2 487.7,606.1 488.7,605.9 489.7,605.8 490.7,605.7 491.7,605.6 492.7,605.5 493.7,605.4 494.7,605.3 495.7,605.2 496.7,605.1 497.7,605.0 498.7,604.9 499.7,604.8 500.7,604.7 501.7,604.6 502.7,604.5 503.7,604.4 504.7,604.3 505.7,604.2 506.7,604.1 507.7,604.0 508.7,604.0 509.7,603.9 510.7,603.8 511.7,603.7 512.7,603.6 513.7,603.6 514.7,603.5 515.7,603.4 516.7,603.3 517.7,603.3 518.7,603.2 519.7,603.1 520.7,603.0 521.7,603.0 522.7,602.9 523.7,602.8 524.7,602.8 525.7,602.7 526.7,602.7 527.7,602.6 528.7,602.5 529.7,602.5 530.7,602.4 531.7,602.4 532.7,602.3 533.7,602.2 534.7,602.2 535.7,602.1 536.7,602.1 537.7,602.0 538.7,602.0 539.7,601.9 540.7,601.9 541.7,601.8 542.7,601.8 543.7,601.7 544.7,601.7 545.7,601.7 546.7,601.6 547.7,601.6 548.7,601.5 549.7,601.5 550.7,601.5 551.7,601.4 552.7,601.4 553.7,601.3 554.7,601.3 555.7,601.3 556.7,601.2 557.7,601.2 558.7,601.2 559.7,601.1 560.7,601.1 561.7,601.1 562.7,601.0 563.7,601.0 564.7,601.0 565.7,601.0 566.7,600.9 567.7,600.9 568.7,600.9 569.7,600.9 570.7,600.8 571.7,600.8 572.7,600.8 573.7,600.8 574.7,600.7 575.7,600.7 576.7,600.7 577.7,600.7 578.7,600.7 579.7,600.6 580.7,600.6 581.7,600.6 582.7,600.6 583.7,600.6 584.7,600.6 585.7,600.6 586.7,600.5 587.7,600.5 588.7,600.5 589.7,600.5 590.7,600.5 591.7,600.5 592.7,600.5 593.7,600.5 594.7,600.4 595.7,600.4 596.7,600.4 597.7,600.4 598.7,600.4 599.7,600.4 600.7,600.4 601.7,600.4 602.7,600.4 603.7,600.4 604.7,600.4 605.7,600.4 606.5,600.4 606.5,483.3 607.5,483.3 607.5,550.0 608.5,574.0 609.5,591.0 610.5,606.0 611.6,619.4 612.6,629.4 613.8,639.4 615.2,648.0 616.6,659.5 618.8,668.0 620.9,676.0 623.8,681.0 628.8,686.0 630.2,697.0 632.4,691.0 636.0,685.3 637.0,683.4 638.0,681.4 639.0,679.5 640.0,677.6 641.0,675.7 642.0,673.8 643.0,672.1 644.0,670.3 645.0,668.6 646.0,667.0 647.0,665.4 648.0,663.9 649.0,662.5 650.0,661.0 651.0,659.6 652.0,658.3 653.0,657.0 654.0,655.8 655.0,654.5 656.0,653.4 657.0,652.2 658.0,651.1 659.0,650.0 660.0,649.0 661.0,648.0 662.0,647.0 663.0,646.0 664.0,645.1 665.0,644.2 666.0,643.3 667.0,642.4 668.0,641.6 669.0,640.8 670.0,640.0 671.0,639.2 672.0,638.4 673.0,637.7 674.0,637.0 675.0,636.3 676.0,635.6 677.0,634.9 678.0,634.3 679.0,633.6 680.0,633.0 681.0,632.4 682.0,631.8 683.0,631.2 684.0,630.6 685.0,630.1 686.0,629.5 687.0,629.0 688.0,628.4 689.0,627.9 690.0,627.4 691.0,626.9 692.0,626.4 693.0,626.0 694.0,625.5 695.0,625.0 696.0,624.6 697.0,624.1 698.0,623.7 699.0,623.3 700.0,622.9 701.0,622.5 702.0,622.1 703.0,621.7 704.0,621.3 705.0,620.9 706.0,620.6 707.0,620.2 708.0,619.8 709.0,619.5 710.0,619.1 711.0,618.8 712.0,618.5 713.0,618.1 714.0,617.8 715.0,617.5 716.0,617.2 717.0,616.9 718.0,616.6 719.0,616.3 720.0,616.0 721.0,615.7 722.0,615.5 723.0,615.2 724.0,614.9 725.0,614.7 726.0,614.4 727.0,614.1 728.0,613.9 729.0,613.6 730.0,613.4 731.0,613.2 732.0,612.9 733.0,612.7 734.0,612.5 735.0,612.2 736.0,612.0 737.0,611.8 738.0,611.6 739.0,611.4 740.0,611.2 741.0,611.0 742.0,610.8 743.0,610.6 744.0,610.4 745.0,610.2 746.0,610.0 747.0,609.8 748.0,609.6 749.0,609.5 750.0,609.3 751.0,609.1 752.0,608.9 753.0,608.8 754.0,608.6 755.0,608.5 756.0,608.3 757.0,608.1 758.0,608.0 759.0,607.8 760.0,607.7 761.0,607.5 762.0,607.4 763.0,607.3 764.0,607.1 765.0,607.0 766.0,606.8 767.0,606.7 768.0,606.6 769.0,606.4 770.0,606.3 771.0,606.2 772.0,606.1 773.0,605.9 774.0,605.8 775.0,605.7 776.0,605.6 777.0,605.5 778.0,605.4 779.0,605.3 780.0,605.2 781.0,605.0 782.0,604.9 783.0,604.8 784.0,604.7 785.0,604.6 786.0,604.5 787.0,604.4 788.0,604.4 789.0,604.3 790.0,604.2 791.0,604.1 792.0,604.0 793.0,603.9 794.0,603.8 795.0,603.7 796.0,603.6 797.0,603.6 798.0,603.5 799.0,603.4 800.0,603.3 801.0,603.3 802.0,603.2 803.0,603.1 804.0,603.0 805.0,603.0 806.0,602.9 807.0,602.8 808.0,602.8 809.0,602.7 810.0,602.6 811.0,602.6 812.0,602.5 813.0,602.4 814.0,602.4 815.0,602.3 816.0,602.3 817.0,602.2 818.0,602.2 819.0,602.1 820.0,602.0 821.0,602.0 822.0,601.9 823.0,601.9 824.0,601.8 825.0,601.8 826.0,601.7 827.0,601.7 828.0,601.7 829.0,601.6 830.0,601.6 831.0,601.5 832.0,601.5 833.0,601.4 834.0,601.4 835.0,601.4 836.0,601.3 837.0,601.3 838.0,601.3 839.0,601.2 840.0,601.2 841.0,601.2 842.0,601.1 843.0,601.1 844.0,601.1 845.0,601.0 846.0,601.0 847.0,601.0 848.0,600.9 849.0,600.9 850.0,600.9 851.0,600.9 852.0,600.8 853.0,600.8 854.0,600.8 855.0,600.8 856.0,600.7 857.0,600.7 858.0,600.7 859.0,600.7 860.0,600.7 861.0,600.6 862.0,600.6 863.0,600.6 864.0,600.6 865.0,600.6 866.0,600.6 867.0,600.5 868.0,600.5 869.0,600.5 870.0,600.5 871.0,600.5 872.0,600.5 873.0,600.5 874.0,600.4 875.0,600.4 876.0,600.4 877.0,600.4 878.0,600.4 879.0,600.4 880.0,600.4 881.0,600.4 882.0,600.4 883.0,600.4 884.0,600.4 885.0,600.4 886.0,600.4 887.0,600.4 888.0,600.4 889.0,600.4 890.0,600.4 891.0,600.3 892.0,600.3 893.0,600.3 894.0,600.3 895.0,600.3 896.0,600.3 897.0,600.3 898.0,600.4 898.3,600.4 898.3,561.0 899.4,561.0 899.4,481.9 900.4,481.9 900.4,567.0 901.7,584.0 902.7,598.5 903.6,612.2 904.6,624.4 905.8,634.4 907.2,643.0 908.6,655.9 910.8,665.9 912.9,674.5 915.8,680.3 920.8,685.3 922.7,696.7 924.5,691.6 926.9,686.6 927.9,685.0 928.9,683.3 929.9,681.5 930.9,679.7 931.9,678.0 932.9,676.2 933.9,674.5 934.9,672.8 935.9,671.2 936.9,669.6 937.9,668.1 938.9,666.6 939.9,665.2 940.9,663.8 941.9,662.4 942.9,661.1 943.9,659.8 944.9,658.6 945.9,657.4 946.9,656.2 947.9,655.0 948.9,653.9 949.9,652.8 950.9,651.8 951.9,650.7 952.9,649.7 953.9,648.8 954.9,647.8 955.9,646.9 956.9,645.9 957.9,645.1 958.9,644.2 959.9,643.3 960.9,642.5 961.9,641.7 962.9,640.9 963.9,640.1 964.9,639.3 965.9,638.6 966.9,637.8 967.9,637.1 968.9,636.4 969.9,635.7 970.9,635.0 971.9,634.4 972.9,633.7 973.9,633.1 974.9,632.4 975.9,631.8 976.9,631.2 977.9,630.6 978.9,630.0 979.9,629.4 980.9,628.9 981.9,628.3 982.9,627.8 983.9,627.2 984.9,626.7 985.9,626.2 986.9,625.6 987.9,625.1 988.9,624.6 989.9,624.1 990.9,623.7 991.9,623.2 992.9,622.7 993.9,622.2 994.9,621.8 995.9,621.3 996.9,620.9 997.9,620.5 998.9,620.0 999.9,619.6" fill="none" stroke="#00ff00" stroke-width="1.1" stroke-linejoin="miter"/>
</svg>
<!-- status bar -->
<div class="a" style="left:2px;top:749px;width:1022px;height:1px;background:#fff"></div>
<!-- overlay widget bottom-right -->
<div class="a" style="left:885px;top:724px;width:139px;height:41px;border-top:2px solid rgba(170,170,170,0.9);border-left:2px solid rgba(200,200,200,0.9)"></div>
<div class="a" style="left:887px;top:726px;width:137px;height:15px;background:rgba(110,150,190,0.8)"></div>
<div class="a" style="left:887px;top:741px;width:137px;height:24px;background:rgba(180,215,245,0.85)"></div>
<div class="a" style="left:887px;top:746px;width:137px;height:2px;background:rgba(90,110,130,0.4)"></div>
<div class="t" style="left:973px;top:729px;font-size:11px;color:#203040">5 Кб/с</div>
<svg class="a" style="left:1000px;top:728px" width="24" height="40"><circle cx="12" cy="9" r="5" fill="#3a6a9a"/><path d="M5 22 L17 22 L11 28z" fill="#6a8aa8"/></svg>
</body></html>
